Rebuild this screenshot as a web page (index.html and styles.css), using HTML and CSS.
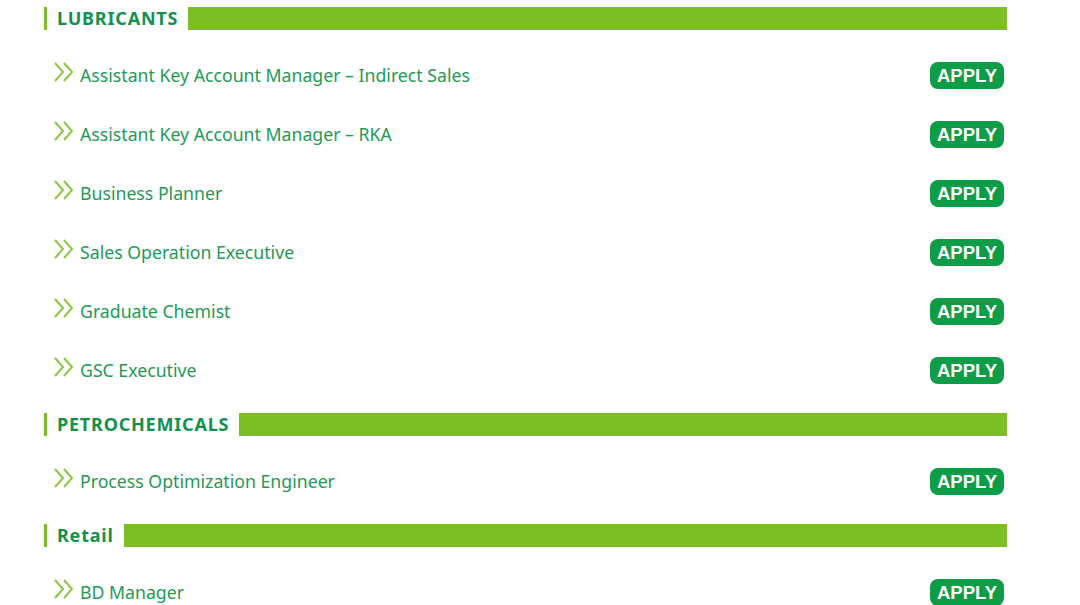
FILE: index.html
```html
<!DOCTYPE html>
<html>
<head>
<meta charset="utf-8">
<link rel="stylesheet" href="styles.css">
</head>
<body>
<div class="jobs">
  <section class="group">
    <div class="group-head"><h2 class="group-title">LUBRICANTS</h2><span class="group-bar"></span></div>
    <div class="job"><span class="chev"><svg width="22" height="20" viewBox="0 0 22 20"><path d="M2 1 L10 10 L2 19 M11 1 L19 10 L11 19" fill="none" stroke="#8cc63f" stroke-width="2"/></svg></span><span class="job-title">Assistant Key Account Manager – Indirect Sales</span><a class="apply">APPLY</a></div>
    <div class="job"><span class="chev"><svg width="22" height="20" viewBox="0 0 22 20"><path d="M2 1 L10 10 L2 19 M11 1 L19 10 L11 19" fill="none" stroke="#8cc63f" stroke-width="2"/></svg></span><span class="job-title">Assistant Key Account Manager – RKA</span><a class="apply">APPLY</a></div>
    <div class="job"><span class="chev"><svg width="22" height="20" viewBox="0 0 22 20"><path d="M2 1 L10 10 L2 19 M11 1 L19 10 L11 19" fill="none" stroke="#8cc63f" stroke-width="2"/></svg></span><span class="job-title">Business Planner</span><a class="apply">APPLY</a></div>
    <div class="job"><span class="chev"><svg width="22" height="20" viewBox="0 0 22 20"><path d="M2 1 L10 10 L2 19 M11 1 L19 10 L11 19" fill="none" stroke="#8cc63f" stroke-width="2"/></svg></span><span class="job-title">Sales Operation Executive</span><a class="apply">APPLY</a></div>
    <div class="job"><span class="chev"><svg width="22" height="20" viewBox="0 0 22 20"><path d="M2 1 L10 10 L2 19 M11 1 L19 10 L11 19" fill="none" stroke="#8cc63f" stroke-width="2"/></svg></span><span class="job-title">Graduate Chemist</span><a class="apply">APPLY</a></div>
    <div class="job"><span class="chev"><svg width="22" height="20" viewBox="0 0 22 20"><path d="M2 1 L10 10 L2 19 M11 1 L19 10 L11 19" fill="none" stroke="#8cc63f" stroke-width="2"/></svg></span><span class="job-title">GSC Executive</span><a class="apply">APPLY</a></div>
  </section>
  <section class="group">
    <div class="group-head"><h2 class="group-title">PETROCHEMICALS</h2><span class="group-bar"></span></div>
    <div class="job"><span class="chev"><svg width="22" height="20" viewBox="0 0 22 20"><path d="M2 1 L10 10 L2 19 M11 1 L19 10 L11 19" fill="none" stroke="#8cc63f" stroke-width="2"/></svg></span><span class="job-title">Process Optimization Engineer</span><a class="apply">APPLY</a></div>
  </section>
  <section class="group">
    <div class="group-head"><h2 class="group-title">Retail</h2><span class="group-bar"></span></div>
    <div class="job"><span class="chev"><svg width="22" height="20" viewBox="0 0 22 20"><path d="M2 1 L10 10 L2 19 M11 1 L19 10 L11 19" fill="none" stroke="#8cc63f" stroke-width="2"/></svg></span><span class="job-title">BD Manager</span><a class="apply">APPLY</a></div>
  </section>
</div>
</body>
</html>
```
FILE: styles.css
```css
html, body { margin: 0; padding: 0; background: #ffffff; }
body { font-family: "Noto Sans", "Open Sans", sans-serif; overflow: hidden; }
.jobs { width: 963px; margin-left: 44px; padding-top: 7px; }
.group + .group { margin-top: 13px; }
.group-head { display: flex; align-items: stretch; height: 23px; margin-bottom: 16px; }
.group-title {
  margin: 0; padding-left: 10px; border-left: 3px solid #7dbe26;
  font-size: 18px; font-weight: 700; color: #12914d; line-height: 23px; letter-spacing: 0.8px;
}
.group-bar { flex: 1; background: #7dbe26; margin-left: 10px; }
.job { display: flex; align-items: center; height: 59px; }
.chev { display: flex; width: 22px; margin-left: 9px; margin-top: -8px; }
.job-title { flex: 1; margin-left: 5px; font-size: 17.7px; color: #1f9a56; margin-top: -1px; }
.apply {
  display: flex; align-items: center; justify-content: center;
  width: 74px; height: 27px; margin-right: 3px; border-radius: 8px;
  background: #0d9c47; color: #ffffff;
  font-family: "Liberation Sans", Arial, sans-serif; font-weight: 700; font-size: 18.5px;
}
```
